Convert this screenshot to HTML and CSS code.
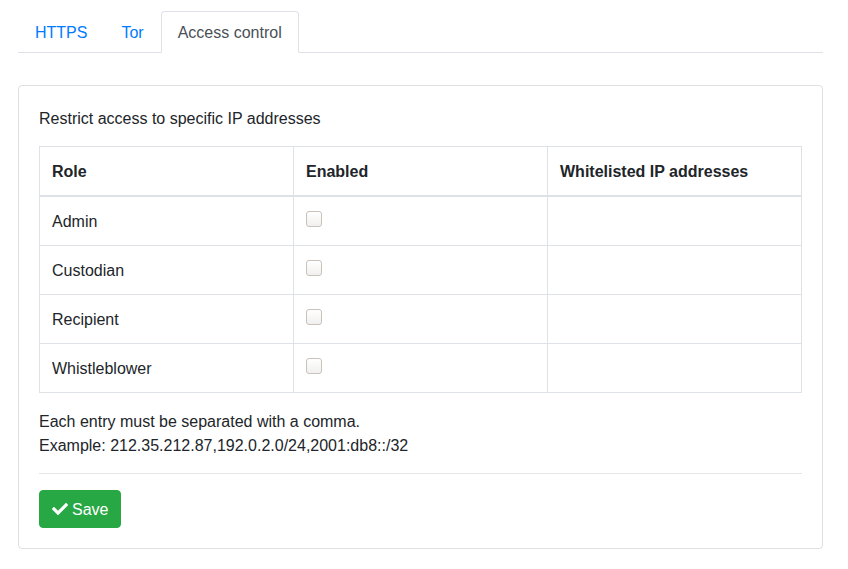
FILE: index.html
```html
<!DOCTYPE html>
<html>
<head>
<meta charset="utf-8">
<link rel="stylesheet" href="styles.css">
</head>
<body>
<div class="page">
  <ul class="tabs">
    <li><a class="tab" href="#">HTTPS</a></li>
    <li><a class="tab" href="#">Tor</a></li>
    <li><a class="tab active" href="#">Access control</a></li>
  </ul>
  <div class="card">
    <p class="intro">Restrict access to specific IP addresses</p>
    <table class="grid">
      <thead>
        <tr><th>Role</th><th>Enabled</th><th>Whitelisted IP addresses</th></tr>
      </thead>
      <tbody>
        <tr><td>Admin</td><td><input type="checkbox" class="chk"></td><td></td></tr>
        <tr><td>Custodian</td><td><input type="checkbox" class="chk"></td><td></td></tr>
        <tr><td>Recipient</td><td><input type="checkbox" class="chk"></td><td></td></tr>
        <tr><td>Whistleblower</td><td><input type="checkbox" class="chk"></td><td></td></tr>
      </tbody>
    </table>
    <p class="note">Each entry must be separated with a comma.<br>Example: 212.35.212.87,192.0.2.0/24,2001:db8::/32</p>
    <hr class="sep">
    <button class="save" type="button"><svg class="check" viewBox="0 0 512 512" width="16" height="16"><path fill="#fff" d="M173.898 439.404l-166.4-166.4c-9.997-9.997-9.997-26.206 0-36.204l36.203-36.204c9.997-9.998 26.207-9.998 36.204 0L192 312.69 432.095 72.596c9.997-9.997 26.207-9.997 36.204 0l36.203 36.204c9.997 9.997 9.997 26.206 0 36.204l-294.4 294.401c-9.998 9.997-26.207 9.997-36.204-.001z"/></svg><span>Save</span></button>
  </div>
</div>
</body>
</html>
```
FILE: styles.css
```css
* { box-sizing: border-box; }
html, body {
  margin: 0;
  background: #fff;
}
body {
  font-family: "Liberation Sans", Arial, sans-serif;
  font-size: 16px;
  line-height: 24px;
  color: #212529;
}
.page {
  padding: 11px 25px 20px 18px;
}
.tabs {
  display: flex;
  list-style: none;
  margin: 0;
  padding: 0;
  border-bottom: 1px solid #dee2e6;
}
.tabs li {
  margin-bottom: -1px;
}
.tab {
  display: block;
  padding: 9px 16px 7px;
  border: 1px solid transparent;
  border-top-left-radius: 4px;
  border-top-right-radius: 4px;
  color: #007bff;
  text-decoration: none;
}
.tab.active {
  color: #495057;
  background: #fff;
  border-color: #dee2e6 #dee2e6 #fff;
}
.card {
  margin-top: 32px;
  border: 1px solid rgba(0,0,0,.125);
  border-radius: 4px;
  padding: 20px;
}
.intro {
  margin: 0 0 16px;
  padding-top: 1px;
  height: 24px;
}
.grid {
  width: 100%;
  border-collapse: collapse;
  table-layout: fixed;
  margin-bottom: 16px;
  border: 1px solid #dee2e6;
}
.grid th, .grid td {
  border: 1px solid #dee2e6;
  padding: 13px 12px 11px;
  text-align: left;
  vertical-align: top;
  height: 49px;
}
.grid th {
  font-weight: bold;
  border-bottom: 2px solid #dee2e6;
}
.chk {
  appearance: none;
  -webkit-appearance: none;
  display: block;
  margin: 1px 0 0;
  width: 16px;
  height: 16px;
  border: 1px solid #c9c2bb;
  border-radius: 3px;
  background: linear-gradient(#ffffff, #f1f0ef);
}
.note {
  margin: 0;
  padding-top: 1px;
}
.sep {
  margin: 15px 0 16px;
  border: 0;
  border-top: 1px solid rgba(0,0,0,.1);
}
.save {
  display: inline-flex;
  align-items: center;
  gap: 4px;
  font-family: inherit;
  font-size: 16px;
  line-height: 24px;
  color: #fff;
  background: #28a745;
  border: 1px solid #28a745;
  border-radius: 4px;
  padding: 7px 12px 5px;
  cursor: pointer;
}
.check {
  display: block;
  margin-top: -2px;
}
```
